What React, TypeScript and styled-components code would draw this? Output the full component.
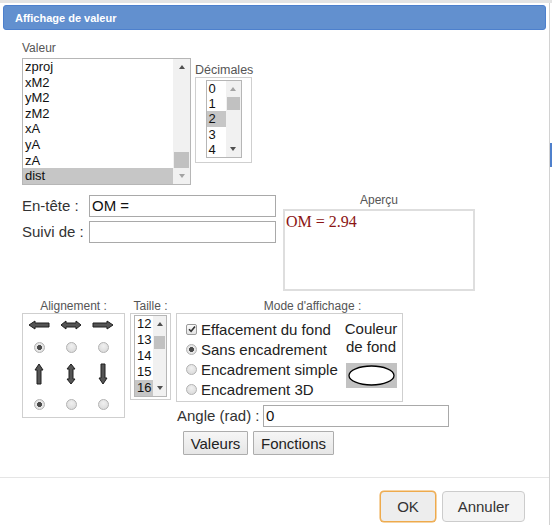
import React from "react";
import styled, { createGlobalStyle } from "styled-components";

const GlobalStyle = createGlobalStyle`
  html, body { margin: 0; padding: 0; background: #fff; }
  body {
    font-family: "Liberation Sans", Arial, sans-serif;
    width: 552px; height: 525px; overflow: hidden; color: #222;
  }
  * { box-sizing: border-box; }
`;

const Page = styled.div`
  position: relative;
  width: 552px;
  height: 525px;
  border-top: 3px solid #e4e4e4;
`;

const PageScrollMark = styled.div`
  position: absolute;
  left: 550px;
  top: 140px;
  width: 2px;
  height: 24px;
  background: #4f80cc;
`;

const Dialog = styled.div`
  width: 550px;
  height: 522px;
  border-right: 1px solid #d2d2d2;
  background: #fff;
  display: flex;
  flex-direction: column;
`;

const TitleBar = styled.div`
  margin: 2px 0 0 3px;
  width: 543px;
  height: 25px;
  background: #6290cf;
  border: 1px solid #4d80cd;
  border-radius: 3px;
  display: flex;
  align-items: center;
  padding-left: 11px;
  color: #fff;
  font-weight: bold;
  font-size: 11px;
`;

const Body = styled.div`
  flex: 1;
  padding: 11px 0 0 22px;
  display: flex;
  flex-direction: column;
`;

const SmallLabel = styled.div<{ $align?: string; $size?: number }>`
  font-size: ${(p) => p.$size ?? 12}px;
  line-height: 14px;
  height: 14px;
  color: #555;
  text-align: ${(p) => p.$align || "left"};
  white-space: nowrap;
`;

const Row = styled.div<{ $gap?: number; $mt?: number }>`
  display: flex;
  align-items: flex-start;
  gap: ${(p) => p.$gap ?? 0}px;
  margin-top: ${(p) => p.$mt ?? 0}px;
`;

const Column = styled.div<{ $w?: number; $mt?: number; $ml?: number }>`
  display: flex;
  flex-direction: column;
  ${(p) => (p.$w ? `width: ${p.$w}px;` : "")}
  margin-top: ${(p) => p.$mt ?? 0}px;
  margin-left: ${(p) => p.$ml ?? 0}px;
`;

/* ---------- list boxes ---------- */

const ListFrame = styled.div<{ $w: number; $h: number; $mt?: number }>`
  width: ${(p) => p.$w}px;
  height: ${(p) => p.$h}px;
  margin-top: ${(p) => p.$mt ?? 0}px;
  border: 1px solid #b6b6b6;
  background: #fff;
  display: flex;
  overflow: hidden;
`;

const ListRows = styled.div`
  flex: 1;
  display: flex;
  flex-direction: column;
  overflow: hidden;
`;

const ListRow = styled.div<{ $h: number; $sel?: boolean }>`
  height: ${(p) => p.$h}px;
  line-height: ${(p) => p.$h}px;
  flex: none;
  font-size: 13px;
  padding-left: 2px;
  color: #111;
  background: ${(p) => (p.$sel ? "#c6c6c6" : "transparent")};
  white-space: nowrap;
`;

const ScrollTrack = styled.div<{ $w: number }>`
  width: ${(p) => p.$w}px;
  flex: none;
  background: #f1f1f1;
  display: flex;
  flex-direction: column;
`;

const ArrowCell = styled.div<{ $h: number }>`
  height: ${(p) => p.$h}px;
  flex: none;
  display: flex;
  align-items: center;
  justify-content: center;
`;

const TriUp = styled.div<{ $on: boolean }>`
  width: 0;
  height: 0;
  border-left: 3.5px solid transparent;
  border-right: 3.5px solid transparent;
  border-bottom: 4px solid ${(p) => (p.$on ? "#505050" : "#a3a3a3")};
`;

const TriDown = styled.div<{ $on: boolean }>`
  width: 0;
  height: 0;
  border-left: 3.5px solid transparent;
  border-right: 3.5px solid transparent;
  border-top: 4px solid ${(p) => (p.$on ? "#505050" : "#a3a3a3")};
`;

const ThumbArea = styled.div`
  flex: 1;
  overflow: hidden;
`;

const Thumb = styled.div<{ $top: number; $h: number }>`
  margin: ${(p) => p.$top}px 1px 0 1px;
  height: ${(p) => p.$h}px;
  background: #c1c1c1;
`;

type ListProps = {
  items: string[];
  selected: number;
  w: number;
  h: number;
  rowH: number;
  barW: number;
  thumbTop: number;
  thumbH: number;
  upOn: boolean;
  downOn: boolean;
  mt?: number;
};

function ListBox(p: ListProps) {
  return (
    <ListFrame $w={p.w} $h={p.h} $mt={p.mt}>
      <ListRows>
        {p.items.map((it, i) => (
          <ListRow key={it} $h={p.rowH} $sel={i === p.selected}>
            {it}
          </ListRow>
        ))}
      </ListRows>
      <ScrollTrack $w={p.barW}>
        <ArrowCell $h={p.rowH}>
          <TriUp $on={p.upOn} />
        </ArrowCell>
        <ThumbArea>
          <Thumb $top={p.thumbTop} $h={p.thumbH} />
        </ThumbArea>
        <ArrowCell $h={p.rowH}>
          <TriDown $on={p.downOn} />
        </ArrowCell>
      </ScrollTrack>
    </ListFrame>
  );
}

const GroupBox = styled.div<{ $w: number; $h: number; $pt?: number }>`
  width: ${(p) => p.$w}px;
  height: ${(p) => p.$h}px;
  border: 1px solid #cfcfcf;
  padding-top: ${(p) => p.$pt ?? 0}px;
  display: flex;
  justify-content: center;
  align-items: flex-start;
`;

/* ---------- fields ---------- */

const FieldGrid = styled.div`
  display: grid;
  grid-template-columns: 67px 187px;
  grid-auto-rows: 22px;
  row-gap: 4px;
  margin-top: 9px;
`;

const FieldLabel = styled.label<{ $w?: number }>`
  font-size: 15px;
  line-height: 22px;
  color: #333;
  white-space: nowrap;
  ${(p) => (p.$w ? `width: ${p.$w}px; flex: none;` : "")}
`;

const TextBox = styled.div<{ $w?: number }>`
  height: 22px;
  ${(p) => (p.$w ? `width: ${p.$w}px;` : "")}
  border: 1px solid #a9a9a9;
  font-size: 15px;
  line-height: 20px;
  padding-left: 2px;
  color: #111;
  background: #fff;
`;

const PreviewBox = styled.div`
  width: 192px;
  height: 82px;
  margin-top: 2px;
  border: 2px solid #dedede;
  padding: 2px 0 0 1px;
  font-family: "Liberation Serif", "Times New Roman", serif;
  font-size: 16px;
  line-height: 18px;
  color: #8b1414;
`;

/* ---------- alignment ---------- */

const AlignGrid = styled.div`
  width: 103px;
  height: 105px;
  border: 1px solid #cfcfcf;
  display: grid;
  grid-template-columns: repeat(3, 32px);
  grid-template-rows: 22px 22px 32px 29px;
  justify-items: center;
  align-items: center;
`;

const RadioDot = styled.span<{ $on?: boolean }>`
  display: inline-block;
  width: 11px;
  height: 11px;
  flex: none;
  border-radius: 50%;
  border: 1px solid #b2b2b2;
  background: ${(p) =>
    p.$on
      ? "radial-gradient(circle, #4a4a4a 0 2.2px, #e9e9e9 2.8px, #d9d9d9 100%)"
      : "radial-gradient(circle at 50% 35%, #f0f0f0, #d6d6d6)"};
`;

const CheckBox = styled.span`
  display: inline-flex;
  align-items: center;
  justify-content: center;
  width: 11px;
  height: 11px;
  flex: none;
  border: 1px solid #9a9a9a;
  border-radius: 2px;
  background: linear-gradient(#fbfbfb, #e4e4e4);
`;

const ArrowIcon = ({ kind }: { kind: "l" | "lr" | "r" | "u" | "ud" | "d" }) => {
  const horizontal = kind === "l" || kind === "lr" || kind === "r";
  const paths: Record<string, string> = {
    l: "M1 5 L7 1 L7 3 L21 3 L21 7 L7 7 L7 9 Z",
    r: "M21 5 L15 1 L15 3 L1 3 L1 7 L15 7 L15 9 Z",
    lr: "M1 5 L6 1 L6 3 L16 3 L16 1 L21 5 L16 9 L16 7 L6 7 L6 9 Z",
    u: "M5 1 L9 7 L7 7 L7 21 L3 21 L3 7 L1 7 Z",
    d: "M5 21 L9 15 L7 15 L7 1 L3 1 L3 15 L1 15 Z",
    ud: "M5 1 L9 6 L7 6 L7 16 L9 16 L5 21 L1 16 L3 16 L3 6 L1 6 Z",
  };
  return horizontal ? (
    <svg width="22" height="10" viewBox="0 0 22 10">
      <path d={paths[kind]} fill="#555" stroke="#1e1e1e" strokeWidth="1" strokeLinejoin="round" />
    </svg>
  ) : (
    <svg width="10" height="22" viewBox="0 0 10 22">
      <path d={paths[kind]} fill="#555" stroke="#1e1e1e" strokeWidth="1" strokeLinejoin="round" />
    </svg>
  );
};

/* ---------- mode ---------- */

const ModeBox = styled.div`
  width: 227px;
  height: 89px;
  border: 1px solid #cfcfcf;
  padding: 5px 5px 0 9px;
  display: flex;
`;

const OptionList = styled.div`
  display: flex;
  flex-direction: column;
`;

const Option = styled.div`
  height: 20px;
  display: flex;
  align-items: center;
  gap: 4px;
  font-size: 15px;
  color: #222;
  white-space: nowrap;
`;

const ColorColumn = styled.div`
  margin-left: auto;
  width: 52px;
  display: flex;
  flex-direction: column;
  align-items: center;
  font-size: 15px;
  line-height: 18px;
  color: #222;
  text-align: center;
  padding-top: 1px;
`;

const Swatch = styled.div`
  width: 51px;
  height: 25px;
  margin-top: 7px;
  background: #c2c2c2;
  display: flex;
  align-items: center;
  justify-content: center;
`;

const AngleRow = styled.div`
  display: flex;
  margin-top: 3px;
  margin-left: 1px;
`;

const SmallButton = styled.button<{ $w: number }>`
  width: ${(p) => p.$w}px;
  height: 24px;
  padding: 0;
  border: 1px solid #adadad;
  border-radius: 1px;
  background: linear-gradient(#f6f6f6, #e6e6e6);
  font-family: "Liberation Sans", Arial, sans-serif;
  font-size: 15px;
  color: #222;
`;

const ButtonRow = styled.div`
  display: flex;
  gap: 5px;
  margin-top: 4px;
  margin-left: 7px;
`;

/* ---------- footer ---------- */

const Footer = styled.div`
  border-top: 1px solid #e5e5e5;
  padding: 13px 24px 3px 0;
  display: flex;
  justify-content: flex-end;
  gap: 6px;
`;

const FooterButton = styled.button<{ $w: number; $primary?: boolean }>`
  width: ${(p) => p.$w}px;
  height: 31px;
  padding: 0;
  border-radius: 4px;
  border: 1px solid ${(p) => (p.$primary ? "#eeaa4c" : "#cccccc")};
  box-shadow: ${(p) => (p.$primary ? "0 0 0 0.5px #eeaa4c" : "none")};
  background: ${(p) => (p.$primary ? "#ededed" : "#f4f4f4")};
  font-family: "Liberation Sans", Arial, sans-serif;
  font-size: 15px;
  color: #333;
`;

export default function App() {
  return (
    <>
      <GlobalStyle />
      <Page>
        <Dialog>
          <TitleBar>Affichage de valeur</TitleBar>
          <Body>
            <Row $gap={4}>
              <Column>
                <SmallLabel>Valeur</SmallLabel>
                <ListBox
                  mt={3}
                  w={169}
                  h={127}
                  rowH={15.6}
                  barW={17}
                  items={["zproj", "xM2", "yM2", "zM2", "xA", "yA", "zA", "dist"]}
                  selected={7}
                  thumbTop={77.5}
                  thumbH={17.5}
                  upOn={true}
                  downOn={false}
                />
              </Column>
              <Column $mt={22}>
                <SmallLabel $size={12.5}>Décimales</SmallLabel>
                <GroupBox $w={57} $h={86} $pt={2}>
                  <ListBox
                    w={36}
                    h={78}
                    rowH={15.2}
                    barW={15}
                    items={["0", "1", "2", "3", "4"]}
                    selected={2}
                    thumbTop={1}
                    thumbH={12.5}
                    upOn={false}
                    downOn={true}
                  />
                </GroupBox>
              </Column>
            </Row>

            <Row $mt={1} $gap={7}>
              <FieldGrid>
                <FieldLabel>En-tête :</FieldLabel>
                <TextBox>OM =</TextBox>
                <FieldLabel>Suivi de :</FieldLabel>
                <TextBox />
              </FieldGrid>
              <Column $mt={7} $w={192}>
                <SmallLabel $align="center">Aperçu</SmallLabel>
                <PreviewBox>OM = 2.94</PreviewBox>
              </Column>
            </Row>

            <Row $mt={8} $gap={5}>
              <Column $w={103}>
                <SmallLabel $align="center">Alignement :</SmallLabel>
                <AlignGrid>
                  <ArrowIcon kind="l" />
                  <ArrowIcon kind="lr" />
                  <ArrowIcon kind="r" />
                  <RadioDot $on />
                  <RadioDot />
                  <RadioDot />
                  <ArrowIcon kind="u" />
                  <ArrowIcon kind="ud" />
                  <ArrowIcon kind="d" />
                  <RadioDot $on />
                  <RadioDot />
                  <RadioDot />
                </AlignGrid>
              </Column>
              <Column $w={41}>
                <SmallLabel $align="center">Taille :</SmallLabel>
                <GroupBox $w={41} $h={87} $pt={1}>
                  <ListBox
                    w={33}
                    h={82}
                    rowH={16}
                    barW={13}
                    items={["12", "13", "14", "15", "16"]}
                    selected={4}
                    thumbTop={4}
                    thumbH={13}
                    upOn={true}
                    downOn={true}
                  />
                </GroupBox>
              </Column>
              <Column>
                <SmallLabel $align="center">Mode d'affichage :</SmallLabel>
                <ModeBox>
                  <OptionList>
                    <Option>
                      <CheckBox>
                        <svg width="8" height="8" viewBox="0 0 8 8">
                          <path d="M1 4.2 L3.1 6.3 L7 1.5" fill="none" stroke="#333" strokeWidth="1.6" />
                        </svg>
                      </CheckBox>
                      Effacement du fond
                    </Option>
                    <Option>
                      <RadioDot $on />
                      Sans encadrement
                    </Option>
                    <Option>
                      <RadioDot />
                      Encadrement simple
                    </Option>
                    <Option>
                      <RadioDot />
                      Encadrement 3D
                    </Option>
                  </OptionList>
                  <ColorColumn>
                    <div>Couleur</div>
                    <div>de fond</div>
                    <Swatch>
                      <svg width="49" height="23" viewBox="0 0 49 23">
                        <ellipse cx="24.5" cy="11.5" rx="22.5" ry="9.5" fill="#fff" stroke="#000" strokeWidth="1.3" />
                      </svg>
                    </Swatch>
                  </ColorColumn>
                </ModeBox>
                <AngleRow>
                  <FieldLabel $w={86}>Angle (rad) :</FieldLabel>
                  <TextBox $w={186}>0</TextBox>
                </AngleRow>
                <ButtonRow>
                  <SmallButton $w={65}>Valeurs</SmallButton>
                  <SmallButton $w={81}>Fonctions</SmallButton>
                </ButtonRow>
              </Column>
            </Row>
          </Body>
          <Footer>
            <FooterButton $w={56} $primary>
              OK
            </FooterButton>
            <FooterButton $w={83}>Annuler</FooterButton>
          </Footer>
        </Dialog>
        <PageScrollMark />
      </Page>
    </>
  );
}
